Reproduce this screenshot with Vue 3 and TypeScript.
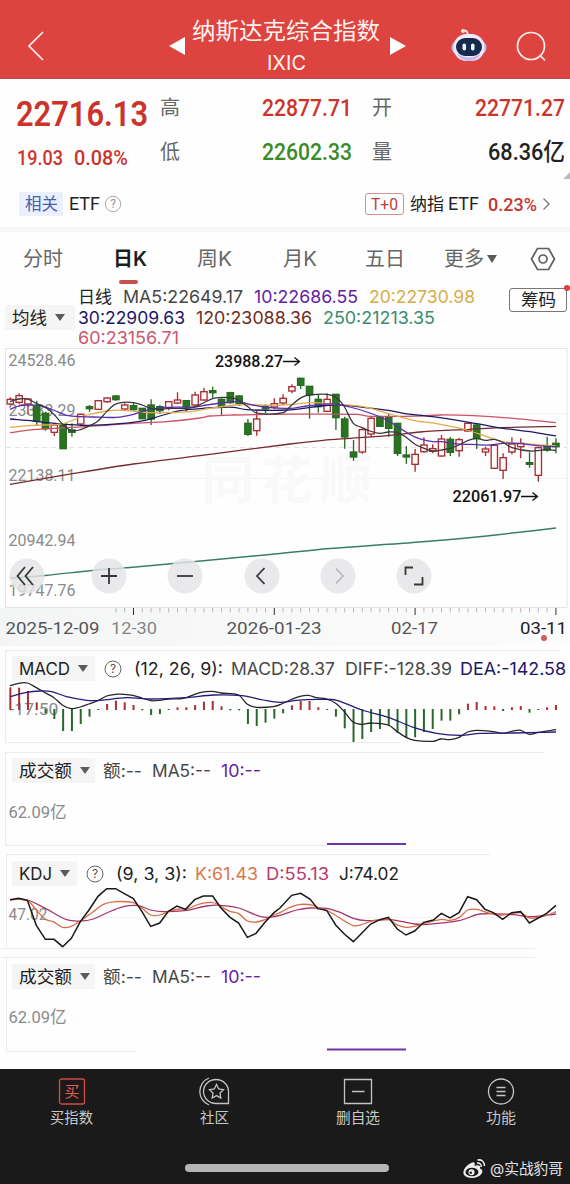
<script setup lang="ts">
import { h } from 'vue'

// Text whose advance width is fixed, with a box as high as its capitals.
const Fit = (p: { t: string; w: number; s: number }) => {
  const height = Math.round(p.s * 0.72)
  return h('svg', { class: 'fit', width: p.w, height }, [
    h('text', { x: 0, y: height, 'font-size': p.s, textLength: p.w, lengthAdjust: 'spacingAndGlyphs' }, p.t),
  ])
}
Fit.props = ['t', 'w', 's']

const STEP = 26.4
const START = 31
const cx = (i: number): number => START + i * STEP

type Candle = [kind: 'r' | 'g', top: number, bottom: number, high: number, low: number]
const candles: Candle[] = [
  ['r', 163, 177, 157, 180], ['r', 152, 172, 145, 178], ['r', 162, 177, 160, 208], ['g', 183, 228, 167, 240],
  ['g', 205, 251, 200, 257], ['r', 240, 262, 236, 273], ['g', 237, 311, 237, 311], ['g', 255, 262, 235, 275],
  ['r', 208, 237, 206, 243], ['g', 185, 191, 180, 200], ['r', 167, 193, 166, 195], ['r', 159, 170, 156, 173],
  ['g', 153, 164, 150, 167], ['r', 180, 192, 175, 195], ['g', 182, 194, 172, 197], ['g', 190, 221, 190, 221],
  ['g', 180, 222, 163, 240], ['g', 185, 197, 180, 207], ['r', 170, 188, 168, 196], ['r', 165, 174, 142, 178],
  ['g', 167, 185, 165, 200], ['r', 150, 180, 140, 187], ['r', 140, 165, 128, 167], ['g', 137, 143, 125, 158],
  ['g', 163, 185, 160, 210], ['g', 143, 173, 140, 176], ['g', 153, 176, 150, 183], ['g', 235, 268, 222, 273],
  ['r', 222, 257, 198, 272], ['g', 184, 191, 178, 205], ['r', 176, 186, 160, 192], ['r', 160, 174, 148, 180],
  ['r', 125, 138, 118, 145], ['g', 100, 121, 98, 132], ['g', 124, 149, 124, 221], ['g', 163, 185, 150, 203],
  ['r', 163, 199, 145, 200], ['g', 148, 218, 148, 255], ['g', 222, 276, 215, 311], ['g', 321, 336, 285, 347],
  ['r', 254, 321, 250, 326], ['r', 220, 267, 213, 277], ['g', 215, 244, 212, 245], ['g', 216, 250, 207, 275],
  ['g', 235, 325, 235, 333], ['g', 330, 336, 303, 356], ['r', 328, 358, 312, 380], ['r', 300, 320, 277, 323],
  ['r', 311, 319, 298, 325], ['r', 282, 333, 270, 335], ['g', 283, 322, 276, 333], ['r', 284, 317, 278, 335],
  ['r', 235, 258, 233, 260], ['g', 240, 281, 237, 312], ['r', 312, 321, 305, 333], ['r', 301, 370, 298, 372],
  ['r', 338, 376, 325, 402], ['r', 297, 321, 277, 328], ['r', 295, 305, 280, 340], ['g', 353, 358, 322, 368],
  ['r', 308, 391, 305, 410], ['g', 303, 315, 275, 320], ['g', 295, 305, 280, 325],
]

// Smooth a polyline with Catmull-Rom segments.
const curve = (raw: string): string => {
  const p = raw.trim().split(/\s+/).map((s) => s.split(',').map(Number))
  let d = `M${p[0][0]} ${p[0][1]}`
  for (let i = 0; i < p.length - 1; i++) {
    const a = p[Math.max(0, i - 1)], b = p[i], c = p[i + 1], e = p[Math.min(p.length - 1, i + 2)]
    const k = (c[0] - b[0]) / 3
    const m1 = i ? (c[1] - a[1]) / (c[0] - a[0]) : (c[1] - b[1]) / (c[0] - b[0])
    const m2 = i < p.length - 2 ? (e[1] - b[1]) / (e[0] - b[0]) : (c[1] - b[1]) / (c[0] - b[0])
    d += `C${b[0] + k} ${b[1] + k * m1} ${c[0] - k} ${c[1] - k * m2} ${c[0]} ${c[1]}`
  }
  return d
}

const averages = [
  { c: '#762a2f', d: curve('30,418 200,389 400,357 600,332 720,316 870,297 970,286 1050,280 1170,271 1260,261 1410,253 1540,247 1668,244') },
  { c: '#cb5068', d: curve('30,263 100,254 200,248 300,242 400,235 500,230 600,219 630,213 700,210 820,208 1070,208 1110,214 1260,213 1320,210 1420,212 1540,220 1668,233') },
  { c: '#1c1865', d: curve('30,222 100,228 165,235 260,241 360,236 430,227 480,213 540,197 600,191 640,188 700,187 740,194 860,195 1000,180 1090,187 1170,197 1210,205 1320,218 1430,236 1510,250 1590,260 1668,273') },
  { c: '#e3ac49', d: curve('30,247 100,241 190,236 250,213 320,198 370,196 450,203 500,203 570,200 630,190 710,180 770,180 850,180 940,173 1000,178 1090,185 1170,207 1240,226 1310,236 1400,255 1460,275 1510,290 1560,295 1668,303') },
  { c: '#5a2cb0', d: curve('30,193 56,183 82,180 120,182 160,195 205,212 280,216 350,217 400,208 450,193 500,187 584,186 620,180 663,174 710,170 750,178 800,187 870,190 920,183 1000,177 1050,186 1110,204 1160,225 1210,256 1250,278 1298,290 1324,290 1360,296 1430,299 1470,300 1510,295 1560,296 1610,302 1668,305') },
  { c: '#39373d', d: curve('30,170 56,162 82,162 109,175 140,190 165,212 188,238 214,257 241,254 267,243 294,228 320,200 345,178 373,172 400,173 426,180 452,190 480,193 505,190 560,190 584,186 610,174 640,160 690,158 716,165 742,184 770,204 850,203 875,180 905,157 930,150 980,148 1005,155 1030,180 1060,235 1085,247 1110,258 1140,265 1165,261 1192,262 1220,278 1245,298 1272,310 1298,318 1350,310 1377,300 1403,287 1430,280 1456,286 1483,283 1510,293 1536,308 1590,318 1641,314 1668,316') },
]
const yearLine = curve('10,578 45,575.5 92,570.5 130,567.5 190,562 270,554.5 330,548.5 400,543.5 450,539.5 500,534.5 556,528')

const macdEnds = [
  112, 113, 123, 157, 190, 207, 243, 243, 222, 200, 180, 162, 152, 157, 165, 181, 195, 192, 180, 172, 172, 165,
  155, 153, 169, 181, 181, 222, 228, 218, 206, 190, 166, 153, 153, 172, 180, 200, 235, 276, 267, 246, 237, 228,
  249, 262, 262, 246, 237, 212, 212, 193, 161, 156, 168, 169, 183, 172, 168, 188, 180, 172, 165,
]
const diff = curve('30,107 56,100 82,99 109,113 135,128 162,143 188,166 214,176 241,171 267,162 294,152 320,138 347,133 373,133 399,136 426,144 452,152 479,151 505,147 550,145 600,128 636,124 663,129 716,135 742,163 770,172 820,170 840,164 870,150 900,139 925,136 950,143 980,147 1007,160 1033,185 1058,215 1085,223 1112,219 1165,225 1192,245 1218,262 1244,271 1300,274 1323,267 1350,269 1377,262 1403,246 1430,241 1480,245 1508,250 1540,243 1562,241 1588,253 1615,247 1668,239')
const dea = curve('30,140 80,127 120,123 155,125 200,140 260,151 300,151 380,143 450,147 560,143 640,135 725,137 790,150 840,157 890,151 950,148 1010,151 1085,180 1165,202 1240,232 1310,250 1380,256 1440,250 1540,249 1668,246')

const jLine = '30,149 56,145 82,151 109,226 136,268 162,268 188,290 214,265 241,215 267,180 294,139 320,116 347,116 373,131 400,146 426,185 452,229 479,219 505,184 531,168 557,178 584,149 610,138 638,138 663,174 690,202 716,219 742,262 768,250 795,217 822,188 840,174 875,136 902,130 930,147 953,176 980,181 1007,225 1033,252 1060,275 1085,250 1112,222 1140,209 1165,202 1192,237 1218,255 1244,243 1271,217 1300,210 1324,190 1350,204 1377,188 1403,140 1430,149 1455,178 1480,188 1508,208 1535,188 1562,185 1588,219 1640,190 1668,166'
const kLine = curve('30,149 82,151 109,180 136,208 160,215 188,232 214,229 241,213 280,185 310,163 347,155 400,158 426,175 452,195 479,195 510,183 540,177 560,178 590,165 620,158 645,159 663,170 690,184 716,191 742,213 770,216 795,209 822,195 840,188 875,170 902,163 940,166 965,177 990,186 1060,227 1090,222 1112,214 1165,207 1190,224 1218,232 1244,229 1271,221 1324,208 1350,211 1377,203 1403,180 1430,178 1460,187 1500,196 1562,188 1588,204 1640,196 1668,185')
const dLine = curve('30,149 82,150 136,175 200,209 241,213 280,207 320,189 370,170 415,167 452,180 490,185 560,181 620,168 660,166 716,174 770,196 800,202 840,196 890,180 930,174 980,175 1020,187 1060,205 1100,212 1170,209 1244,222 1280,223 1377,212 1440,192 1540,194 1588,200 1668,192')

const ticks = Array.from({ length: 51 }, (_, n) => n + 12)
const axis = [
  { t: '24528.46', y: 366 }, { t: '23333.29', y: 416 }, { t: '22138.11', y: 481 },
  { t: '20942.94', y: 546 }, { t: '19747.76', y: 596 },
]
const controls = [
  { x: 27, d: 'M-2 -9L-9.500 0L-2 9M6 -9L-1.500 0L6 9' },
  { x: 109, d: 'M-8 0H8M0 -8V8' },
  { x: 185, d: 'M-8 0H8' },
  { x: 262, d: 'M2.500 -8L-5 0L2.500 8' },
  { x: 338, d: 'M-2 -7.500L5 0L-2 7.500', off: true },
  { x: 414, d: 'M-8.500 -1V-8.500H-1M8.500 1V8.500H0' },
]
</script>

<template>
  <main class="app">
    <header class="top">
      <svg class="back" width="18" height="30"><path d="M16 1L2 15L16 29" /></svg>
      <svg class="arrow prev" width="16" height="18"><path d="M0 9L16 0V18Z" /></svg>
      <div class="title">
        <Fit t="纳斯达克综合指数" :w="188" :s="23" />
        <Fit class="code" t="IXIC" :w="39" :s="20" />
      </div>
      <svg class="arrow next" width="16" height="18"><path d="M16 9L0 0V18Z" /></svg>
      <svg class="robot" width="36" height="34" viewBox="0 0 36 34">
        <path d="M12 3Q16 1 17 7" fill="none" stroke="#efe4ed" stroke-width="2" />
        <circle cx="12" cy="3" r="2" fill="#ffe0d5" />
        <rect x="0.500" y="13" width="35" height="13" rx="6" fill="#bfb6ee" />
        <rect x="2.500" y="6" width="31" height="27" rx="13" fill="#eeeafa" />
        <path d="M6 26Q18 33 30 26Q25 33 18 33T6 26" fill="#c6b9f0" />
        <rect x="5" y="10" width="26" height="18" rx="9" fill="#17294d" />
        <rect x="11.500" y="15.500" width="3.500" height="7" rx="1.700" fill="#e7f5ff" />
        <rect x="20" y="15.500" width="3.500" height="7" rx="1.700" fill="#e7f5ff" />
      </svg>
      <svg class="search" width="32" height="32"><circle cx="15" cy="15" r="13.500" /><path d="M23.500 24L29 29.500" /></svg>
    </header>

    <section class="quote">
      <div class="last">
        <Fit class="price" t="22716.13" :w="132" :s="35" />
        <div class="change"><Fit t="19.03" :w="46" :s="21" /><Fit t="0.08%" :w="54" :s="21" /></div>
      </div>
      <div class="cells">
        <Fit class="k" t="高" :w="20" :s="20" /><Fit class="up" t="22877.71" :w="90" :s="23.5" />
        <Fit class="k" t="开" :w="20" :s="20" /><Fit class="up" t="22771.27" :w="90" :s="23.5" />
        <Fit class="k" t="低" :w="20" :s="20" /><Fit class="down" t="22602.33" :w="90" :s="23.5" />
        <Fit class="k" t="量" :w="20" :s="20" /><Fit class="vol" t="68.36亿" :w="77" :s="23.5" />
      </div>
      <svg class="corner" width="7" height="7"><path d="M7 0V7H0Z" /></svg>
    </section>

    <section class="related">
      <span class="tag"><Fit t="相关" :w="33" :s="16.5" /></span>
      <Fit class="etf" t="ETF" :w="31" :s="17.5" />
      <svg class="help" width="18" height="18"><circle cx="9" cy="9" r="7.700" /><text x="9" y="13">?</text></svg>
      <span class="t0"><Fit t="T+0" :w="27" :s="16" /></span>
      <Fit class="fund" t="纳指" :w="34" :s="17.5" />
      <Fit class="fundetf" t="ETF" :w="31" :s="17.5" />
      <Fit class="pct" t="0.23%" :w="49" :s="19" />
      <svg class="more" width="9" height="14"><path d="M1.500 1.500L7 7L1.500 12.500" /></svg>
    </section>

    <nav class="tabs">
      <Fit class="tab" t="分时" :w="40" :s="20" />
      <div class="tab on"><Fit t="日K" :w="34" :s="20" /><i /></div>
      <Fit class="tab" t="周K" :w="35" :s="20" />
      <Fit class="tab" t="月K" :w="34" :s="20" />
      <Fit class="tab" t="五日" :w="40" :s="20" />
      <Fit class="tab" t="更多" :w="40" :s="20" />
      <svg class="tri" width="10" height="8"><path d="M0 0H10L5 8Z" /></svg>
      <svg class="hex" width="26" height="24"><path d="M7.500 1.500H18.500L24.500 12L18.500 22.500H7.500L1.500 12Z" /><circle cx="13" cy="12" r="4" /></svg>
    </nav>

    <section class="legend">
      <div class="pick ma"><Fit t="均线" :w="35" :s="17.5" /><svg class="tri" width="10" height="7"><path d="M0 0H10L5 7Z" /></svg></div>
      <div class="values">
        <div><Fit class="ink" t="日线" :w="34" :s="17.5" /><Fit class="gray" t="MA5:22649.17" :w="120" :s="17.5" /><Fit class="violet" t="10:22686.55" :w="104" :s="17.5" /><Fit class="gold" t="20:22730.98" :w="106" :s="17.5" /></div>
        <div><Fit class="navy" t="30:22909.63" :w="107" :s="17.5" /><Fit class="brown" t="120:23088.36" :w="116" :s="17.5" /><Fit class="teal" t="250:21213.35" :w="112" :s="17.5" /></div>
        <div><Fit class="pink" t="60:23156.71" :w="101" :s="17.5" /></div>
      </div>
      <div class="chips"><Fit t="筹码" :w="35" :s="17" /><b /></div>
    </section>

    <svg class="chart" width="570" height="300" viewBox="0 346 570 300">
      <defs>
        <linearGradient id="fade" x2="1" y2="0"><stop offset="0" stop-color="#f4f5f5" /><stop offset="1" stop-color="#fcfcfc" /></linearGradient>
      </defs>
      <rect x="0" y="608" width="570" height="38" fill="url(#fade)" />
      <g class="grid">
        <rect x="5.500" y="348.500" width="561.500" height="259" />
        <path d="M6 413.500H567M6 478.500H567" class="faint" />
        <path d="M6 447.500H567" class="dash" />
      </g>
      <text class="mark" x="202" y="499" textLength="170">同花顺</text>
      <text v-for="a in axis" :key="a.t" class="num" x="8.500" :y="a.y" textLength="67" lengthAdjust="spacingAndGlyphs">{{ a.t }}</text>
      <g transform="translate(0 345) scale(0.33333)">
        <g v-for="(c, i) in candles" :key="i" :class="c[0] === 'r' ? 'rise' : 'fall'">
          <path :d="`M${cx(i)} ${c[3]}V${c[1]}M${cx(i)} ${c[2]}V${c[4]}`" />
          <rect :x="cx(i) - 9.500" :y="c[1]" width="19" :height="c[2] - c[1]" />
        </g>
        <path v-for="m in averages" :key="m.c" class="avg" :d="m.d" :stroke="m.c" />
      </g>
      <path class="year" :d="yearLine" />
      <g class="note">
        <text x="215" y="367" textLength="68" lengthAdjust="spacingAndGlyphs">23988.27</text>
        <path d="M283 361.500H299M294.500 357.500L299.500 361.500L294.500 365.500" />
        <text x="452.500" y="502" textLength="69" lengthAdjust="spacingAndGlyphs">22061.97</text>
        <path d="M521 496.500H537M532.500 492.500L537.500 496.500L532.500 500.500" />
      </g>
      <g v-for="b in controls" :key="b.x" class="ctl" :class="{ off: b.off }" :transform="`translate(${b.x} 576)`">
        <circle r="17.500" /><path :d="b.d" />
      </g>
      <path v-for="k in ticks" :key="k" class="tick" :class="{ major: k % 16 === 14 }" :d="`M${10.3 + k * 8.8} 608V${k % 16 === 14 ? 615 : 612.5}`" />
      <g class="dates">
        <text x="5.500" y="634" textLength="94" lengthAdjust="spacingAndGlyphs">2025-12-09</text>
        <text x="111" y="634" class="dim" textLength="46" lengthAdjust="spacingAndGlyphs">12-30</text>
        <text x="226.500" y="634" textLength="95" lengthAdjust="spacingAndGlyphs">2026-01-23</text>
        <text x="391" y="634" textLength="47" lengthAdjust="spacingAndGlyphs">02-17</text>
        <text x="520" y="634" class="now" textLength="47" lengthAdjust="spacingAndGlyphs">03-11</text>
        <circle cx="544" cy="638" r="3" />
      </g>
    </svg>

    <section class="panel macd">
      <svg class="plot" width="570" height="106" viewBox="0 646 570 106">
        <path class="frame" d="M5.500 650V743M6 742.500H400M6 650.500H560" />
        <text class="num" x="9.500" y="714.500" textLength="49" lengthAdjust="spacingAndGlyphs">-17.50</text>
        <g transform="translate(0 650) scale(0.33333)">
          <path v-for="(v, i) in macdEnds" :key="i" :class="v < 178 ? 'hot' : 'cold'" :d="`M${cx(i)} ${v < 178 ? 180 : 177}V${v}`" />
          <path class="thin" :d="diff" stroke="#26242b" /><path class="thin" :d="dea" stroke="#221b78" />
        </g>
      </svg>
      <div class="bar">
        <div class="pick"><Fit t="MACD" :w="51" :s="17" /><svg class="tri" width="10" height="7"><path d="M0 0H10L5 7Z" /></svg></div>
        <svg class="help dark" width="18" height="18"><circle cx="9" cy="9" r="8" /><text x="9" y="13">?</text></svg>
        <Fit class="ink" t="(12, 26, 9):" :w="89" :s="17" />
        <Fit class="gray" t="MACD:28.37" :w="104" :s="17" /><Fit class="gray" t="DIFF:-128.39" :w="107" :s="17" /><Fit class="navy" t="DEA:-142.58" :w="106" :s="17" />
      </div>
    </section>

    <section class="panel amount">
      <svg class="plot" width="570" height="102" viewBox="0 752 570 102">
        <path class="frame" d="M5.500 752V846M6 752.500H545M6 845.500H326" /><path class="purple" d="M327 844H406" />
        <text class="num" x="8.500" y="817.500" textLength="58" lengthAdjust="spacingAndGlyphs">62.09亿</text>
      </svg>
      <div class="bar">
        <div class="pick"><Fit t="成交额" :w="53" :s="17.5" /><svg class="tri" width="10" height="7"><path d="M0 0H10L5 7Z" /></svg></div>
        <Fit class="gray" t="额:--" :w="39" :s="17" /><Fit class="gray" t="MA5:--" :w="59" :s="17" /><Fit class="violet" t="10:--" :w="40" :s="17" />
      </div>
    </section>

    <section class="panel kdj">
      <svg class="plot" width="570" height="103" viewBox="0 854 570 103">
        <path class="frame" d="M6.500 854V947M7 854.500H490M0 948.500H535" /><path class="faint" d="M60 917.500H560" />
        <text class="num" x="8.500" y="920" textLength="39" lengthAdjust="spacingAndGlyphs">47.02</text>
        <g transform="translate(0 850) scale(0.33333)">
          <path class="thin" :d="dLine" stroke="#a5356b" /><path class="thin" :d="kLine" stroke="#d86b43" />
          <polyline class="thin j" :points="jLine" />
        </g>
      </svg>
      <div class="bar">
        <div class="pick"><Fit t="KDJ" :w="33" :s="17" /><svg class="tri" width="10" height="7"><path d="M0 0H10L5 7Z" /></svg></div>
        <svg class="help dark" width="18" height="18"><circle cx="9" cy="9" r="8" /><text x="9" y="13">?</text></svg>
        <Fit class="ink" t="(9, 3, 3):" :w="71" :s="17" />
        <Fit class="orange" t="K:61.43" :w="63" :s="17" /><Fit class="rose" t="D:55.13" :w="63" :s="17" /><Fit class="ink" t="J:74.02" :w="60" :s="17" />
      </div>
    </section>

    <section class="panel amount last-panel">
      <svg class="plot" width="570" height="112" viewBox="0 751 570 112">
        <path class="frame" d="M6.500 752V845M0 751.500H535M6 845.500H136" /><path class="purple" d="M327 843.500H406" />
        <text class="num" x="8.500" y="817" textLength="58" lengthAdjust="spacingAndGlyphs">62.09亿</text>
      </svg>
      <div class="bar">
        <div class="pick"><Fit t="成交额" :w="53" :s="17.5" /><svg class="tri" width="10" height="7"><path d="M0 0H10L5 7Z" /></svg></div>
        <Fit class="gray" t="额:--" :w="39" :s="17" /><Fit class="gray" t="MA5:--" :w="59" :s="17" /><Fit class="violet" t="10:--" :w="40" :s="17" />
      </div>
    </section>

    <footer class="dock">
      <nav>
        <div class="item buy">
          <svg width="30" height="28"><rect x="2.500" y="1" width="25" height="25" rx="2" /><text x="15" y="19">买</text></svg><Fit t="买指数" :w="43" :s="14.5" />
        </div>
        <div class="item">
          <svg width="30" height="28"><path d="M16 1.500A12.500 12 0 1 0 16 25.500H28.500V13.500A12.500 12 0 0 0 16 1.500ZM9 0A14.500 14.500 0 0 0 9 27M16.500 6.500L18.700 11L23.500 11.700L20 15L20.800 20L16.500 17.600L12.200 20L13 15L9.500 11.700L14.300 11Z" /></svg><Fit t="社区" :w="29" :s="14.5" />
        </div>
        <div class="item">
          <svg width="30" height="28"><path d="M1.500 1.500H28.500V25.500H1.500ZM9 13.500H21.500" /></svg><Fit t="删自选" :w="44" :s="14.5" />
        </div>
        <div class="item">
          <svg width="30" height="28"><circle cx="15" cy="13.500" r="12.500" /><path d="M10.500 9.500H19.500M10.500 13.500H19.500M10.500 17.500H19.500" /></svg><Fit t="功能" :w="30" :s="14.5" />
        </div>
      </nav>
      <div class="home">
        <span />
        <div class="credit">
          <svg width="23" height="20" viewBox="0 0 23 20">
            <path d="M8 4C11 2 12.500 4 11.500 7C15 5.500 18 6.500 17 9.500C20 10.500 20 13 18 15.500C14.500 19.500 6 20 2 17C-2 13.500 2 7 8 4Z" fill="#eee" />
            <ellipse cx="9" cy="13" rx="6.500" ry="4.300" fill="#1b1b1b" /><circle cx="8.500" cy="13.300" r="3" fill="#eee" /><circle cx="7.800" cy="13.700" r="1.200" fill="#1b1b1b" />
            <path d="M14 4.200Q18 3.500 18.300 8M14.500 1Q21 0 21.500 7" fill="none" stroke="#eee" stroke-width="1.500" />
          </svg>
          <Fit t="@实战豹哥" :w="73" :s="14.5" />
        </div>
      </div>
    </footer>
  </main>
</template>

<style>
body { margin: 0; background: #fff; }
</style>
<style scoped>
.app { width: 570px; height: 1184px; overflow: hidden; background: #fefefe; color: #222; font-family: Inter, "Noto Sans CJK SC", sans-serif; }
svg { display: block; flex: none; overflow: visible; fill: none; }
.fit { fill: currentColor; }
.top { height: 78px; border-bottom: 1px solid #b84652; background: #dd4440; color: #fff1ee; display: flex; box-sizing: content-box; }
.top > svg { stroke: #fff1ee; stroke-width: 1.7; }
.top .back { margin: 31px 0 0 27px; }
.top .arrow { fill: #fff; stroke: none; margin-top: 37px; }
.top .prev { margin-left: 124px; }
.title { width: 188px; margin: 22px 10px 0 7px; display: flex; flex-direction: column; align-items: center; gap: 17px; }
.top .title + .arrow { margin-left: 0; }
.top .robot { margin: 28px 0 0 45px; stroke: none; }
.top .search { margin: 31px 0 0 29px; }
.quote { height: 101px; display: flex; position: relative; color: #cc332b; font-family: Roboto, "Noto Sans CJK SC", sans-serif; font-weight: 500; }
.last { width: 144px; padding: 22px 0 0 16px; }
.last .price { font-weight: 600; }
.change { display: flex; gap: 11px; margin: 24px 0 0 1px; }
.cells { width: 405px; height: 62px; margin-top: 20px; display: grid; grid-template-columns: 102px 110px 94px 99px; grid-template-rows: 17px 17px; row-gap: 27px; align-items: center; }
.k { color: #666; font-weight: 400; }
.down { color: #3a8b27; }
.vol { color: #222; justify-self: end; }
.cells .up:nth-child(4) { justify-self: end; }
.corner { position: absolute; right: 0; bottom: 1px; fill: #bbb; }
.related { height: 47px; display: flex; align-items: center; border-bottom: 5px solid #f6f7f7; font-family: Roboto, "Noto Sans CJK SC", sans-serif; }
.tag { width: 44px; height: 24px; margin-left: 19px; background: #eaf0fd; display: grid; place-items: center; color: #4662ac; }
.etf { margin: 0 4px 0 6px; }
.help { stroke: #aaa; }
.help text { font-size: 12px; text-anchor: middle; fill: #999; stroke: none; }
.help.dark { stroke: #666; }
.help.dark text { fill: #555; }
.t0 { box-sizing: border-box; width: 39px; height: 22px; border: 1px solid #cf9292; border-radius: 3px; color: #c03c3c; display: grid; place-items: center; margin-left: 243px; }
.fund { margin-left: 6px; }
.fundetf { margin-left: 4px; }
.pct { margin-left: 9px; color: #c5362f; font-weight: 500; }
.more { margin-left: 5px; stroke: #777; stroke-width: 1.3; }
.tabs { height: 52px; display: flex; align-items: center; color: #666; box-sizing: border-box; padding: 2px 0 0 23px; }
.tabs .tab + .tab { margin-left: 46px; }
.tabs .tab.on { margin-left: 50px; color: #1d1d1d; font-weight: 600; display: flex; flex-direction: column; align-items: center; gap: 14px; padding-top: 18px; }
.on i { width: 19px; height: 4px; border-radius: 2px; background: #c7524d; margin-right: 3px; }
.tabs .on + .tab { margin-left: 50px; }
.tabs .on + .tab + .tab { margin-left: 51px; }
.tabs .on + .tab + .tab + .tab { margin-left: 48px; }
.tabs .on + .tab + .tab + .tab + .tab { margin-left: 39px; }
.tri { fill: #5b5b5b; }
.tabs .tri { margin-left: 3px; }
.hex { margin-left: 33px; stroke: #5e5e5e; stroke-width: 1.7; }
.legend { height: 62px; display: flex; align-items: flex-start; }
.pick { height: 25px; box-sizing: border-box; background: #f5f5f5; display: flex; align-items: center; gap: 8px; padding: 0 7px; }
.legend .pick { width: 70px; margin: 21px 3px 0 5px; }
.values { width: 424px; padding-top: 6px; display: flex; flex-direction: column; gap: 7.5px; }
.values > div { display: flex; gap: 11px; }
.chips { position: relative; box-sizing: border-box; width: 58px; height: 24px; margin: 4px 0 0 7px; border: 1px solid #777; border-radius: 3px; display: grid; place-items: center; }
.chips b { position: absolute; right: -4px; top: -4px; width: 6px; height: 6px; border-radius: 50%; background: #dd3f40; }
.ink { color: #222; } .gray { color: #474747; } .violet { color: #6421a5; } .gold { color: #d6ad4d; }
.navy { color: #1d1766; } .brown { color: #6f2d21; } .teal { color: #3d8b70; } .pink { color: #ca5970; }
.orange { color: #d9774b; } .rose { color: #b43d6b; }
.grid rect { stroke: #e6e6e6; }
.faint { stroke: #f3f3f3; }
.dash { stroke: #eedede; stroke-dasharray: 5 4; }
.mark { font: 700 52px "Noto Sans CJK SC", sans-serif; fill: #f9f9fa; }
.num { font: 16.5px Roboto, "Noto Sans CJK SC", sans-serif; fill: #8a8a8a; }
.rise { stroke: #a92d31; stroke-width: 4; fill: #fffafa; }
.fall { stroke: #296b25; stroke-width: 4; fill: #29751f; }
.avg { stroke-width: 3.8; }
.year { stroke: #397d67; stroke-width: 1.4; }
.note { stroke: #111; stroke-width: 1.3; }
.note text { font: 500 16.5px Roboto, sans-serif; fill: #111; stroke: none; }
.ctl circle { fill: #e4e4e6; fill-opacity: 0.82; }
.ctl path { stroke: #383838; stroke-width: 1.8; }
.ctl.off path { stroke: #bbb; }
.tick { stroke: #bbb; } .tick.major { stroke: #333; }
.dates { font: 17px Roboto, sans-serif; fill: #555; }
.dates .dim { fill: #858585; } .dates .now { fill: #222; } .dates circle { fill: #cd5e5b; }
.panel { display: grid; align-items: start; }
.panel > * { grid-area: 1 / 1; }
.bar { display: flex; align-items: center; gap: 10px; padding-left: 12px; height: 25px; }
.macd .bar { margin-top: 10px; }
.macd .help { margin: 0 2px 0 -1px; }
.bar .pick { width: 83px; }
.macd .ink { margin-right: -2px; } .macd .navy { margin-left: -2px; }
.amount .bar { margin-top: 6px; }
.amount .pick { margin-right: -2px; }
.kdj .bar { margin-top: 7px; }
.kdj .pick { width: 65px; }
.kdj .help { margin: 0 2px 0 -1px; }
.kdj .ink, .kdj .orange { margin-right: -2px; }
.last-panel .bar { margin-top: 7px; }
.frame { stroke: #ececec; }
.purple { stroke: #7133a5; stroke-width: 2; }
.hot, .cold { stroke-width: 6; stroke: #a92e2f; } .cold { stroke: #2b672d; }
.thin { stroke-width: 3.8; } .j { stroke: #18181a; stroke-width: 4.5; }
.dock { height: 115px; background: #1a1a1a; color: #c8c8c8; }
.dock nav { display: grid; grid-template-columns: repeat(4, 143px); padding-top: 9px; }
.item { display: flex; flex-direction: column; align-items: center; gap: 7px; }
.item > svg:first-child { stroke: #c4c4c4; stroke-width: 1.3; }
.item.buy > svg:first-child { stroke: #d44a46; }
.buy text { font-size: 15px; text-anchor: middle; fill: #ed5a54; stroke: none; }
.home { display: flex; margin-top: 30px; }
.home > span { width: 204px; height: 8px; border-radius: 4px; background: #b5b5b5; margin: 11px 74px 0 185px; }
.credit { display: flex; align-items: center; gap: 4px; color: #e4e4e4; height: 26px; margin-top: 3px; }
</style>
